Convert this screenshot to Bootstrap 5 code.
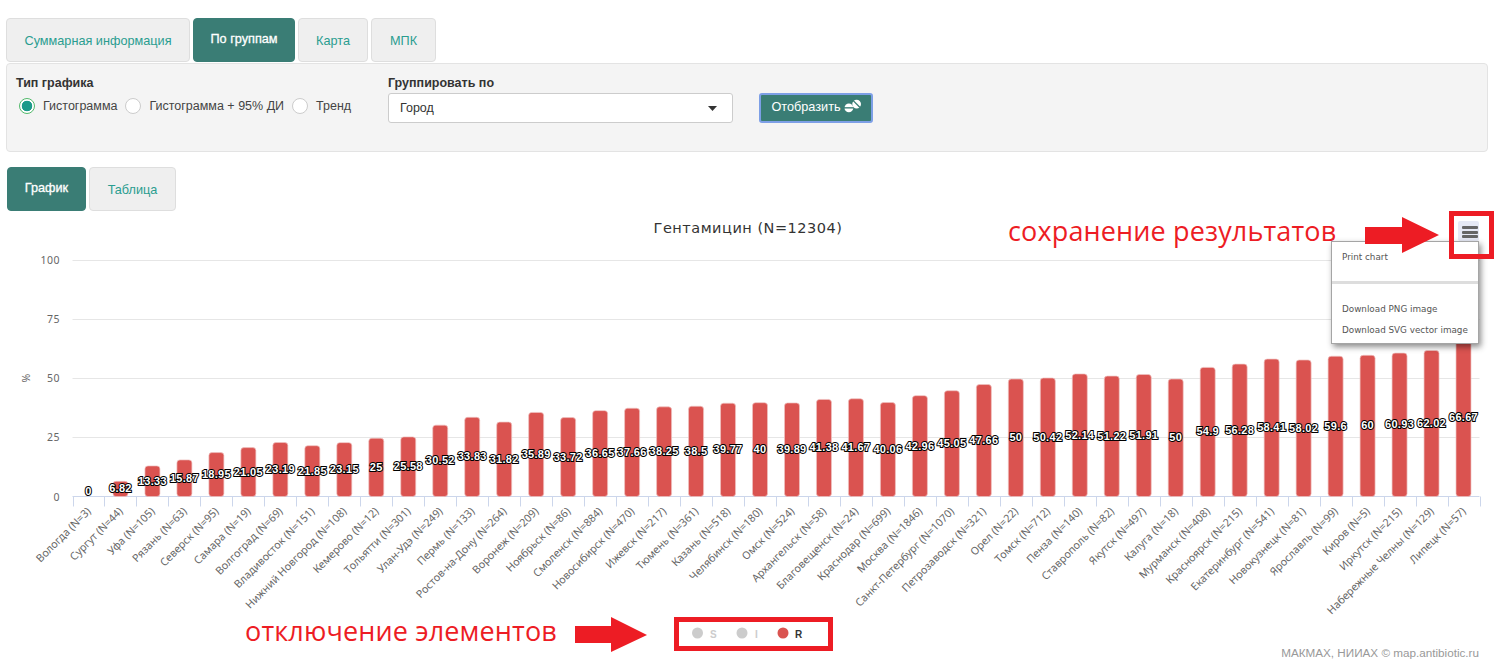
<!DOCTYPE html>
<html lang="ru">
<head>
    <meta charset="UTF-8">
    <meta name="viewport" content="width=device-width, initial-scale=1.0">
    <title>Резистентность по группам</title>
    <link href="https://cdn.jsdelivr.net/npm/bootstrap@5.3.0/dist/css/bootstrap.min.css" rel="stylesheet">
    <style>
        html, body { height: 659px; overflow: hidden; }
        body { background: #fff; font-family: "Liberation Sans", Arial, sans-serif; font-size: 13px; color: #333; }
        .page-wrap { padding: 18px 10px 0 6px; }

        .tab-row { gap: 3px; }
        .tab-row .nav-link { height: 44px; padding: 0; text-align: center; line-height: 44px; font-size: 12.7px; color: #2a9d8f; background: #efefef; border: 1px solid #dedede; border-radius: 4px; }
        .tab-row .nav-link.active { color: #fff; background: #3a7d75; border-color: #3a7d75; -webkit-text-stroke: .3px #fff; line-height: 40px; }
        .tab-main .nav-item:nth-child(1) .nav-link { width: 184px; }
        .tab-main .nav-item:nth-child(2) .nav-link { width: 102px; }
        .tab-main .nav-item:nth-child(3) .nav-link { width: 70px; }
        .tab-main .nav-item:nth-child(4) .nav-link { width: 65px; }
        .tab-sub { margin: 15px 0 0 1px; }
        .tab-sub .nav-item:nth-child(1) .nav-link { width: 79px; }
        .tab-sub .nav-item:nth-child(2) .nav-link { width: 87px; }

        .filter-panel { height: 89px; margin-top: 1px; padding: 11px 9px; background: #f4f4f4; border: 1px solid #e3e3e3; border-radius: 4px; }
        .filter-title { margin: 0 0 2px; font-size: 12.5px; font-weight: 700; line-height: 16px; color: #333; }
        .type-col { width: 372px; }
        .group-col { width: 345px; }
        .type-row { margin-top: 6px; }
        .filter-panel .form-check-inline { display: inline-flex; align-items: center; min-height: 0; margin: 0 8px 0 0; padding: 0; }
        .filter-panel .form-check-input { flex: none; width: 16px; height: 16px; margin: 0 8px 0 0; border: 1px solid #ccc; float: none; }
        .filter-panel .form-check-input:checked { background: radial-gradient(circle, #1c9a8a 0 5px, #fff 5.6px); border-color: #52b96b; }
        .filter-panel .form-check-inline:first-child { margin-left: 3px; }
        .filter-panel .form-check-label { font-size: 12.5px; color: #444; }
        .city-select { height: 30px; padding: 0 11px; font-size: 12.5px; color: #333; border: 1px solid #ccc; border-radius: 3px; background-size: 9px 5px; background-position: right 15px center;
            background-image: url("data:image/svg+xml,%3csvg xmlns='http://www.w3.org/2000/svg' viewBox='0 0 11 6'%3e%3cpath fill='%23333' d='M0 0h11L5.500 6z'/%3e%3c/svg%3e"); }
        .show-btn { width: 114px; height: 30px; margin: 18px 0 0 26px; padding: 0; font-size: 12.7px; color: #fff; background: #3a7d75; border: 2px solid #7d9fe6; border-radius: 3px; }
        .show-btn:hover { color: #fff; background: #3a7d75; border-color: #7d9fe6; }
        .show-btn svg { margin-left: 3px; vertical-align: -2px; }

        .chart-wrap { position: absolute; left: 0; top: 212px; width: 1498px; height: 447px; }
        .chart-svg { display: block; }
        .chart-title { font: 14.5px "DejaVu Sans", sans-serif; fill: #333; letter-spacing: .5px; }
        .axis-y { font: 10.5px "Noto Sans", sans-serif; fill: #666; letter-spacing: .5px; }
        .axis-x { font: 10.7px "Noto Sans", sans-serif; fill: #666; }
        .bar-label { font: 700 11px "Liberation Sans", sans-serif; fill: #fff; stroke: #000; stroke-width: 2px; paint-order: stroke; letter-spacing: .3px; }
        .legend-item { font: 700 10px "Liberation Sans", sans-serif; }
        .note-text { font-family: "Open Sans", sans-serif; font-size: 27px; fill: #ed1c24; letter-spacing: .14px; }
        .credit { font: 11.7px "Liberation Sans", sans-serif; fill: #999; }

        .export-menu { position: absolute; left: 1331px; top: 29px; width: 148px; height: 103px; padding: 11px 10px 0; background: #fff; border: 1px solid #a5a5a5; box-shadow: 2px 3px 6px rgba(0,0,0,.45); font: 8.8px/1 "DejaVu Sans", sans-serif; color: #555; }
        .export-menu hr { margin: 7px -10px 21px; border: 0; border-top: 3px solid #ddd; opacity: 1; }
        .export-menu div { height: 21px; white-space: nowrap; }
        .menu-btn { position: absolute; left: 1458px; top: 9px; width: 21px; height: 20px; padding: 4px 1px 0 4px; background: #e6e9f5; border: 0; border-radius: 2px; }
        .menu-btn span { display: block; height: 3px; margin-bottom: 1.5px; background: #666; border-radius: 1px; }
        .mark-box { position: absolute; border: 5px solid #ed1c24; }
        .mark-menu { left: 1449px; top: -1px; width: 45px; height: 48px; }
        .mark-legend { left: 674px; top: 405px; width: 159px; height: 34px; }
        .mark-arrow { position: absolute; left: 1365px; top: 5px; }
    </style>
</head>
<body>
    <div class="page-wrap">
        <!-- Вкладки -->
        <ul class="nav tab-row tab-main">
            <li class="nav-item"><a class="nav-link" href="#">Суммарная информация</a></li>
            <li class="nav-item"><a class="nav-link active" href="#">По группам</a></li>
            <li class="nav-item"><a class="nav-link" href="#">Карта</a></li>
            <li class="nav-item"><a class="nav-link" href="#">МПК</a></li>
        </ul>

        <!-- Параметры -->
        <div class="filter-panel d-flex align-items-start">
            <div class="type-col">
                <p class="filter-title">Тип графика</p>
                <div class="d-flex align-items-center type-row">
                    <div class="form-check form-check-inline">
                        <input class="form-check-input" type="radio" name="chartType" id="typeHist" checked>
                        <label class="form-check-label" for="typeHist">Гистограмма</label>
                    </div>
                    <div class="form-check form-check-inline">
                        <input class="form-check-input" type="radio" name="chartType" id="typeCi">
                        <label class="form-check-label" for="typeCi">Гистограмма + 95% ДИ</label>
                    </div>
                    <div class="form-check form-check-inline">
                        <input class="form-check-input" type="radio" name="chartType" id="typeTrend">
                        <label class="form-check-label" for="typeTrend">Тренд</label>
                    </div>
                </div>
            </div>
            <div class="group-col">
                <p class="filter-title">Группировать по</p>
                <select class="form-select city-select">
                    <option>Город</option>
                </select>
            </div>
            <button type="button" class="btn show-btn">Отобразить<svg width="17" height="14" viewBox="0 0 17.500 14">
                    <circle cx="5" cy="9" r="4.500" fill="#fff"/>
                    <rect x="0" y="8.200" width="10" height="1.400" fill="#3a7d75"/>
                    <g transform="rotate(45 13 5)">
                        <circle cx="13" cy="5" r="4.500" fill="#fff"/>
                        <rect x="8" y="4.300" width="10" height="1.400" fill="#3a7d75"/>
                    </g>
                </svg></button>
        </div>

        <ul class="nav tab-row tab-sub">
            <li class="nav-item"><a class="nav-link active" href="#">График</a></li>
            <li class="nav-item"><a class="nav-link" href="#">Таблица</a></li>
        </ul>
    </div>

    <!-- График -->
    <div class="chart-wrap">
        <svg class="chart-svg" id="chart" width="1498" height="447" viewBox="0 212 1498 447"></svg>
        <button type="button" class="menu-btn" aria-label="Меню графика"><span></span><span></span><span></span></button>
        <div class="export-menu">
            <div>Print chart</div>
            <hr>
            <div>Download PNG image</div>
            <div>Download SVG vector image</div>
        </div>
        <div class="mark-box mark-menu"></div>
        <div class="mark-box mark-legend"></div>
        <svg class="mark-arrow" width="75" height="37" viewBox="0 0 75 37">
            <polygon points="0,10 37,10 37,0 74,18 37,36 37,27 0,27" fill="#ed1c24"/>
        </svg>
    </div>

    <script src="https://cdn.jsdelivr.net/npm/bootstrap@5.3.0/dist/js/bootstrap.bundle.min.js"></script>
    <script>
        const data = [
            ['Вологда', 3, 0], ['Сургут', 44, 6.82], ['Уфа', 105, 13.33], ['Рязань', 63, 15.87],
            ['Северск', 95, 18.95], ['Самара', 19, 21.05], ['Волгоград', 69, 23.19], ['Владивосток', 151, 21.85],
            ['Нижний Новгород', 108, 23.15], ['Кемерово', 12, 25], ['Тольятти', 301, 25.58], ['Улан-Удэ', 249, 30.52],
            ['Пермь', 133, 33.83], ['Ростов-на-Дону', 264, 31.82], ['Воронеж', 209, 35.89], ['Ноябрьск', 86, 33.72],
            ['Смоленск', 884, 36.65], ['Новосибирск', 470, 37.66], ['Ижевск', 217, 38.25], ['Тюмень', 361, 38.5],
            ['Казань', 518, 39.77], ['Челябинск', 180, 40], ['Омск', 524, 39.89], ['Архангельск', 58, 41.38],
            ['Благовещенск', 24, 41.67], ['Краснодар', 699, 40.06], ['Москва', 1846, 42.96], ['Санкт-Петербург', 1070, 45.05],
            ['Петрозаводск', 321, 47.66], ['Орел', 22, 50], ['Томск', 712, 50.42], ['Пенза', 140, 52.14],
            ['Ставрополь', 82, 51.22], ['Якутск', 497, 51.91], ['Калуга', 18, 50], ['Мурманск', 408, 54.9],
            ['Красноярск', 215, 56.28], ['Екатеринбург', 541, 58.41], ['Новокузнецк', 81, 58.02], ['Ярославль', 99, 59.6],
            ['Киров', 5, 60], ['Иркутск', 215, 60.93], ['Набережные Челны', 129, 62.02], ['Липецк', 57, 66.67]
        ];

        const left = 72.5, right = 1479.5, zero = 496.5, unit = 2.37;
        const step = (right - left) / data.length;
        let out = '';

        out += `<text class="chart-title" x="748" y="233" text-anchor="middle">Гентамицин (N=12304)</text>`;

        // сетка и ось Y
        [100, 75, 50, 25, 0].forEach(v => {
            const y = Math.round(zero - v * unit) + 0.5;
            if (v) out += `<line x1="${left}" x2="${right}" y1="${y}" y2="${y}" stroke="#e6e6e6"/>`;
            out += `<text class="axis-y" x="60" y="${y + 3.5}" text-anchor="end">${v}</text>`;
        });
        out += `<text class="axis-y" x="0" y="0" text-anchor="middle" transform="translate(30 378) rotate(-90)">%</text>`;

        // ось X
        out += `<line x1="${left}" x2="${right}" y1="${zero}" y2="${zero}" stroke="#ccd6eb"/>`;
        for (let i = 0; i <= data.length; i++) {
            const x = Math.round(left + i * step) + 0.5;
            out += `<line x1="${x}" x2="${x}" y1="${zero}" y2="${zero + 10}" stroke="#ccd6eb"/>`;
        }

        // столбцы
        data.forEach((d, i) => {
            const cx = left + (i + 0.5) * step;
            const h = d[2] * unit;
            if (h > 0) out += `<rect x="${cx - 7.5}" y="${zero - h + 1}" width="15" height="${h - 1}" rx="3" fill="#da5350" stroke="#efc3c2" stroke-width=".7"/>`;
        });

        // подписи
        data.forEach((d, i) => {
            const cx = left + (i + 0.5) * step;
            const h = d[2] * unit;
            const ly = d[2] === 0 ? 490.7 : zero - h / 2;
            out += `<text class="bar-label" x="${cx}" y="${ly + 4}" text-anchor="middle">${d[2]}</text>`;
            out += `<text class="axis-x" text-anchor="end" transform="translate(${cx + 3} 512) rotate(-45)">${d[0]} (N=${d[1]})</text>`;
        });

        // легенда
        [[697.5, 710, 'S', '#ccc', '#ccc'], [742, 755, 'I', '#ccc', '#ccc'], [783, 795, 'R', '#da5350', '#333']].forEach(l => {
            out += `<circle cx="${l[0]}" cy="633" r="5.500" fill="${l[3]}"/>`;
            out += `<text class="legend-item" x="${l[1]}" y="638" fill="${l[4]}">${l[2]}</text>`;
        });

        // пометки
        out += `<text class="note-text" x="1008" y="241">сохранение результатов</text>`;
        out += `<text class="note-text" x="245" y="641">отключение элементов</text>`;
        out += `<polygon points="575,626 611,626 611,617 647,635 611,652 611,643 575,643" fill="#ed1c24"/>`;

        out += `<text class="credit" x="1479" y="657" text-anchor="end">МАКМАХ, НИИАХ © map.antibiotic.ru</text>`;

        document.getElementById('chart').innerHTML = out;
    </script>
</body>
</html>
